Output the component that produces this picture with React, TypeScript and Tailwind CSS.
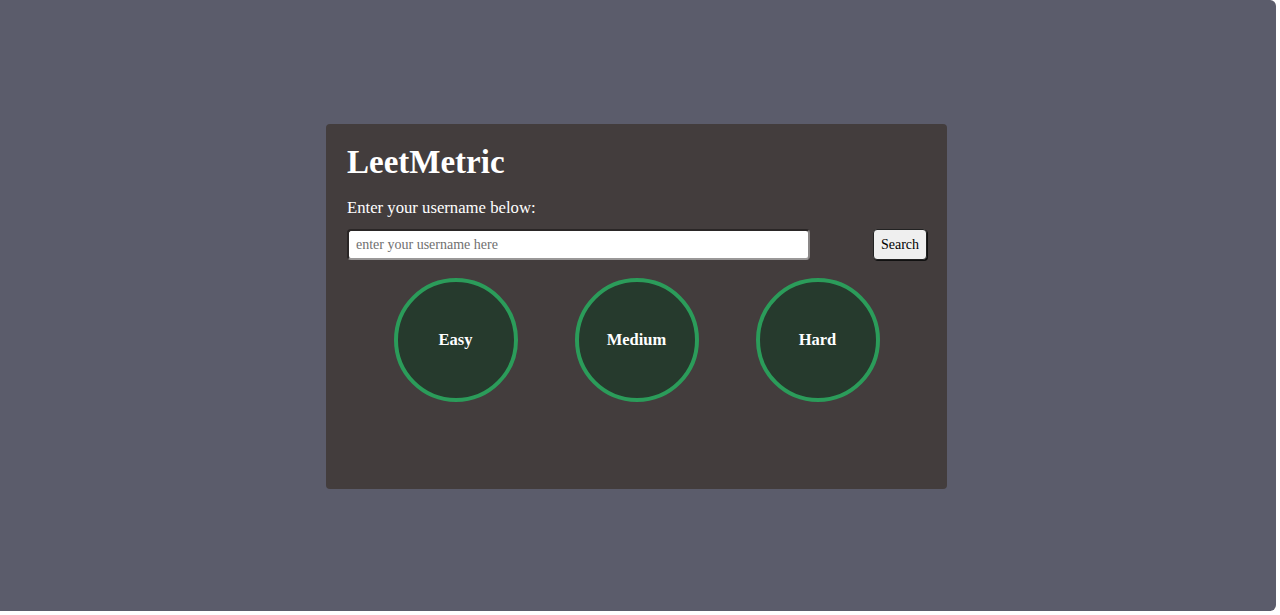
const levels = ['Easy', 'Medium', 'Hard'];

const App = () => {
  return (
    <div className="w-[1280px] h-[615px] bg-white font-['Liberation_Serif',serif]">
      <div className="w-[1276px] h-[611px] bg-[#5b5c6b] rounded-r-[6px] flex justify-center items-center">
        <section className="w-[621px] h-[365px] bg-[#433d3d] rounded-[4px] pt-[20px] pl-[21px] pr-[20px] -ml-[3px] mt-[2px] text-white">
          <h1 className="text-[33px] font-bold leading-[37px] mb-[18px]">LeetMetric</h1>
          <p className="text-[16.7px] leading-[18px] mb-[12px]">Enter your username below:</p>
          <div className="flex justify-between items-center">
            <input
              type="text"
              placeholder="enter your username here"
              className="w-[463px] h-[31px] bg-white rounded-[4px] border-2 border-t-[#2a2626] border-l-[#2a2626] border-r-[#8a8787] border-b-[#9a9898] px-[7px] text-[14px] text-black placeholder:text-[#707070] outline-none"
            />
            <button className="w-[54px] h-[31px] bg-[#efefef] text-black text-[14px] rounded-[4px] border border-[#222] shadow-[1px_1px_0_#111]">
              Search
            </button>
          </div>
          <div className="flex justify-center gap-[57px] mt-[18px] -ml-[1px]">
            {levels.map(level => (
              <div
                key={level}
                className="w-[124px] h-[124px] rounded-full border-4 border-[#2b9c5a] bg-[#263a2d] flex items-center justify-center">
                <span className="text-[16.5px] font-bold leading-[18px] -mt-[1px]">{level}</span>
              </div>
            ))}
          </div>
        </section>
      </div>
    </div>
  );
};

export default App;
